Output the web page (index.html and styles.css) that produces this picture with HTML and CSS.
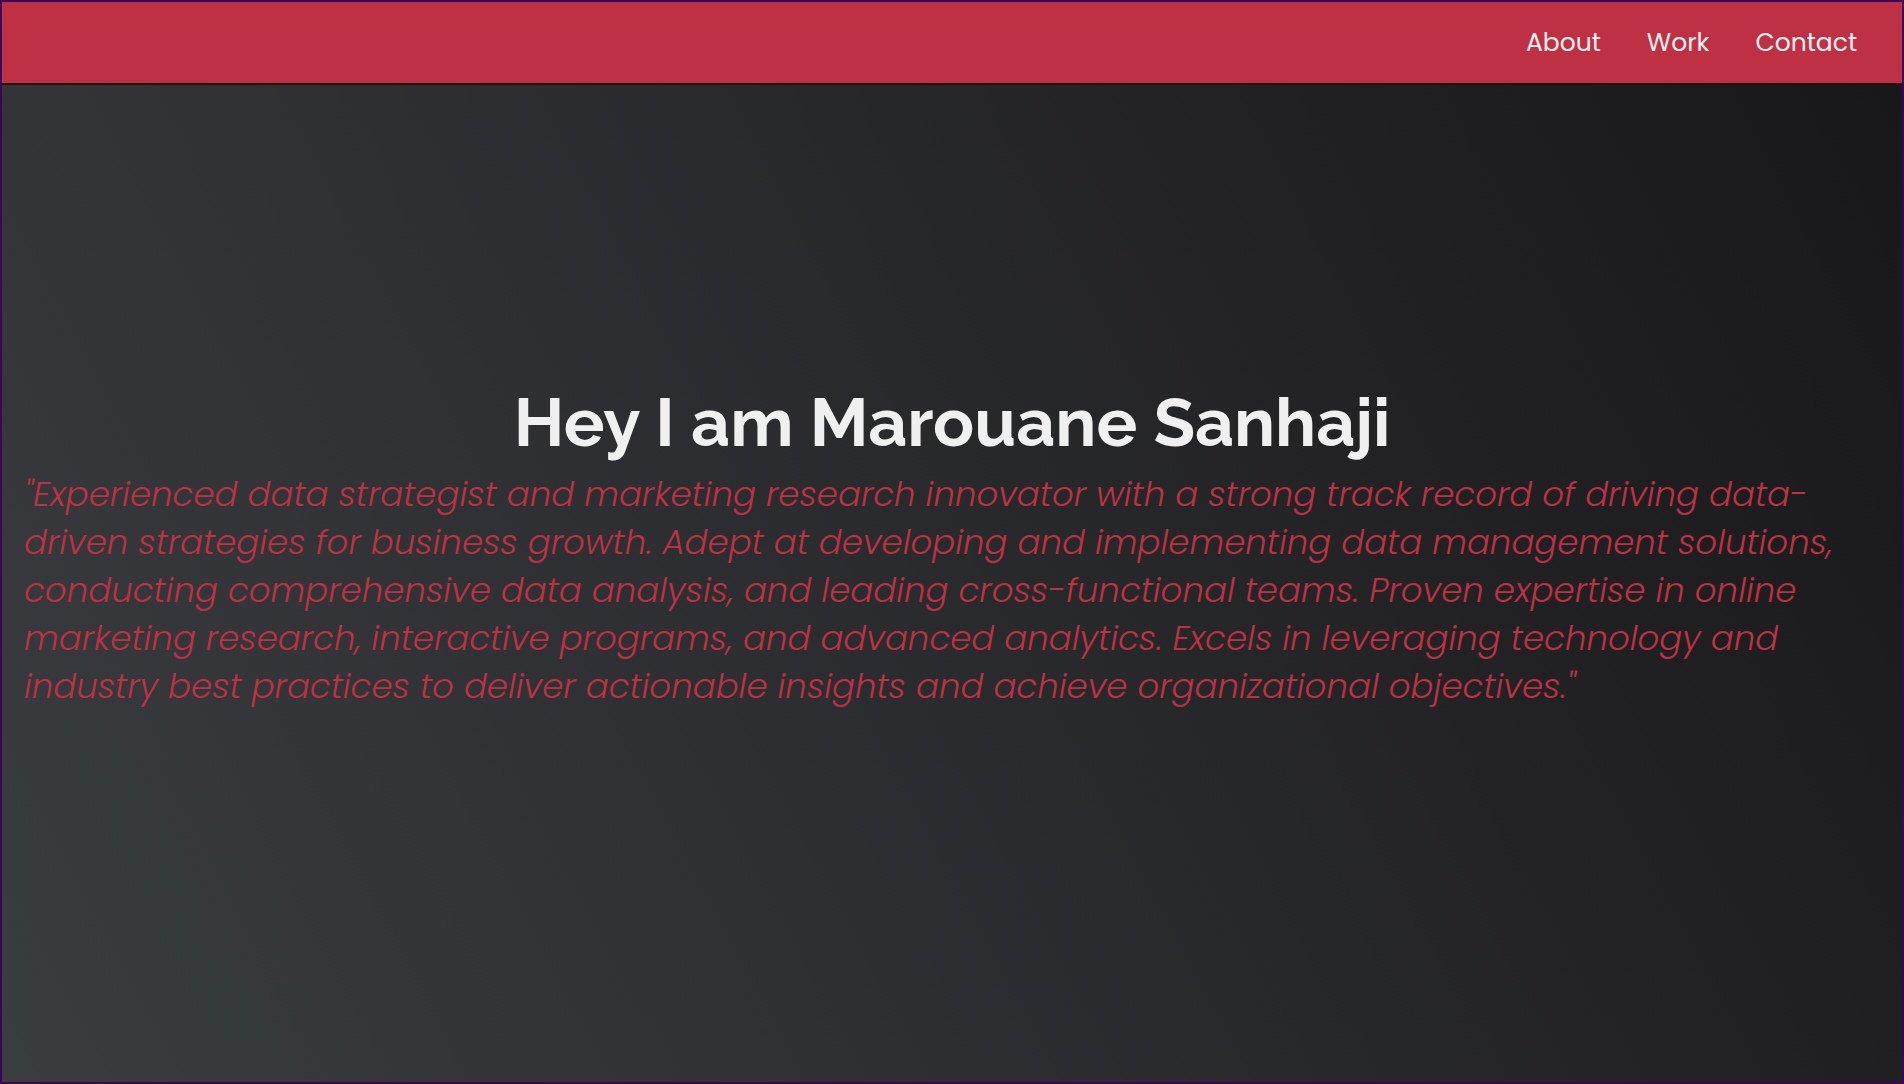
FILE: index.html
```
<!DOCTYPE html>
<html lang="en">
<head>
<meta charset="utf-8">
<meta name="viewport" content="width=device-width, initial-scale=1">
<title>Marouane Sanhaji</title>
<link rel="stylesheet" href="styles.css">
</head>
<body>
<nav class="nav">
<ul class="nav-list">
<li><a href="#welcome">About</a></li>
<li><a href="#projects">Work</a></li>
<li><a href="#contact">Contact</a></li>
</ul>
</nav>
<section class="welcome" id="welcome">
<h1>Hey I am Marouane Sanhaji</h1>
<p>"Experienced data strategist and marketing research innovator with a strong track record of driving data-driven strategies for business growth. Adept at developing and implementing data management solutions, conducting comprehensive data analysis, and leading cross-functional teams. Proven expertise in online marketing research, interactive programs, and advanced analytics. Excels in leveraging technology and industry best practices to deliver actionable insights and achieve organizational objectives."</p>
</section>
</body>
</html>
```
FILE: styles.css
```
* {
  box-sizing: border-box;
  margin: 0;
  padding: 0;
}

body {
  display: flex;
  flex-direction: column;
  min-height: 100vh;
  border: 2px solid #3b0459;
  background: #1b1b1c;
  font-family: Poppins, Inter, "Liberation Sans", sans-serif;
  color: #f0f0f0;
}

.nav {
  background: #be3144;
  border-bottom: 2px solid #260d10;
}

.nav-list {
  display: flex;
  justify-content: flex-end;
  padding: 0 22px;
  list-style: none;
}

.nav a {
  display: block;
  padding: 22px 23px;
  font-size: 25px;
  font-weight: 400;
  line-height: 37px;
  color: #f0f0f0;
  text-decoration: none;
}

.welcome {
  flex: 1;
  display: flex;
  flex-direction: column;
  align-items: center;
  justify-content: center;
  gap: 8px;
  padding: 0 22px 76px;
  background: linear-gradient(62deg, #3a3d40 0%, #181719 100%);
}

.welcome h1 {
  font-family: Raleway, Lato, sans-serif;
  font-size: 68px;
  font-weight: 700;
  line-height: 80px;
}

.welcome p {
  width: 100%;
  font-size: 34px;
  font-style: italic;
  font-weight: 300;
  line-height: 48px;
  color: #be3144;
}
```
